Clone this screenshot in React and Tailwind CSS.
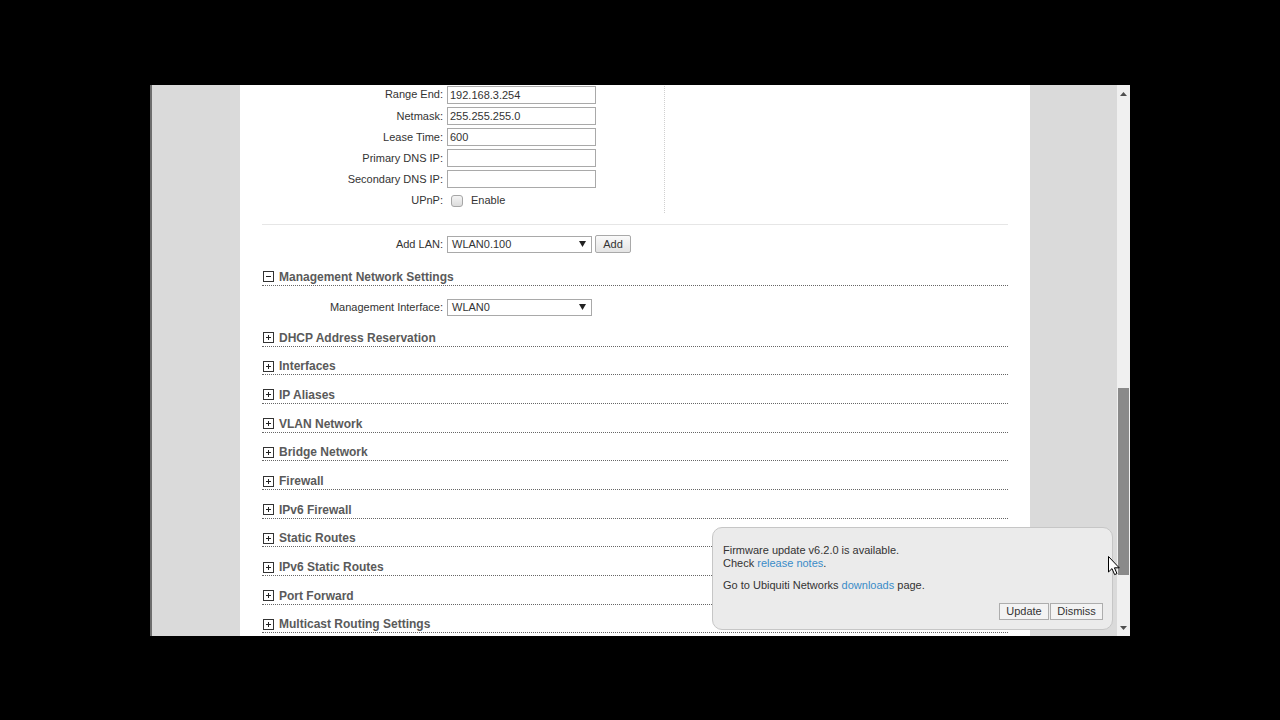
import React from "react";

const font = { fontFamily: '"Liberation Sans", Arial, sans-serif' };

const Field = ({ label, children }) => (
  <div className="flex h-[21.2px] items-center">
    <span className="w-[181px] text-right">{label}</span>
    {children}
  </div>
);

const TextBox = ({ value }) => (
  <div className="ml-[4px] h-[18px] w-[149px] border border-[#a9a9a9] bg-white pl-[2px] leading-[16px]">{value}</div>
);

const SelectBox = ({ value }) => (
  <div className="ml-[4px] flex h-[17px] w-[145px] items-center justify-between border border-[#a9a9a9] bg-white pl-[4px] pr-[5px]">
    <span className="leading-[15px]">{value}</span>
    <svg width="7" height="6" viewBox="0 0 7 6">
      <path d="M0 0 H7 L3.5 6 Z" fill="#222" />
    </svg>
  </div>
);

const ToggleBox = ({ open }) => (
  <svg width="11" height="11" viewBox="0 0 11 11" className="ml-[1px] mr-[5px] shrink-0">
    <rect x="0.5" y="0.5" width="10" height="10" fill="#fff" stroke="#333" />
    <path d="M3 5.5 H8" stroke="#222" strokeWidth="1" />
    {!open && <path d="M5.5 3 V8" stroke="#222" strokeWidth="1" />}
  </svg>
);

const Section = ({ title, open, className }) => (
  <div className={"flex items-end border-b border-dotted border-[#666] " + className}>
    <div className="flex h-[16px] items-center">
      <ToggleBox open={open} />
      <span className="text-[12px] font-bold text-[#5a5a5a]">{title}</span>
    </div>
  </div>
);

const sections = [
  "Interfaces",
  "IP Aliases",
  "VLAN Network",
  "Bridge Network",
  "Firewall",
  "IPv6 Firewall",
  "Static Routes",
  "IPv6 Static Routes",
  "Port Forward",
  "Multicast Routing Settings",
];

export default function App() {
  return (
    <div className="h-[720px] w-[1280px] overflow-hidden bg-black pl-[150px] pt-[85px]" style={font}>
      <div className="relative flex h-[551px] w-[980px] overflow-hidden text-[11px] text-[#333]">
        <div className="w-[90px] border-l-2 border-[#6e6e6e] bg-[#dadada]" />

        <div className="w-[790px] bg-white px-[22px]">
          <div className="-mt-px flex">
            <div className="w-[403px] border-r border-dotted border-[#d0d0d0] pb-[2px]">
              <Field label="Range End:"><TextBox value="192.168.3.254" /></Field>
              <Field label="Netmask:"><TextBox value="255.255.255.0" /></Field>
              <Field label="Lease Time:"><TextBox value="600" /></Field>
              <Field label="Primary DNS IP:"><TextBox value="" /></Field>
              <Field label="Secondary DNS IP:"><TextBox value="" /></Field>
              <Field label="UPnP:">
                <div className="ml-[8px] h-[12px] w-[12px] rounded-[3px] border border-[#a6a6a6] bg-gradient-to-b from-[#f4f4f4] to-[#dcdcdc]" />
                <span className="ml-[8px]">Enable</span>
              </Field>
            </div>
          </div>

          <div className="mt-[11px] border-t border-[#e6e6e6]" />

          <div className="mt-[8.5px] flex h-[21px] items-center">
            <span className="w-[181px] text-right">Add LAN:</span>
            <SelectBox value="WLAN0.100" />
            <button className="ml-[3px] h-[18px] w-[36px] rounded-[2px] border border-[#a9a9a9] bg-gradient-to-b from-[#fafafa] to-[#e4e4e4] leading-[16px] text-[#333]">
              Add
            </button>
          </div>

          <Section title="Management Network Settings" open className="h-[31.3px]" />

          <div className="mt-[11px] flex h-[21px] items-center">
            <span className="w-[181px] text-right">Management Interface:</span>
            <SelectBox value="WLAN0" />
          </div>

          <Section title="DHCP Address Reservation" className="h-[28.7px]" />
          {sections.map((s) => (
            <Section key={s} title={s} className="h-[28.7px]" />
          ))}
        </div>

        <div className="w-[87px] bg-[#dadada]" />

        <div className="flex w-[13px] flex-col bg-[#f0f0f0]">
          <div className="flex h-[17px] items-center justify-center">
            <svg width="7" height="4" viewBox="0 0 7 4">
              <path d="M0 4 L3.5 0 L7 4 Z" fill="#505050" />
            </svg>
          </div>
          <div className="mx-px mt-[286px] h-[187px] bg-[#8a8a8a]" />
          <div className="mt-auto flex h-[17px] items-center justify-center">
            <svg width="7" height="4" viewBox="0 0 7 4">
              <path d="M0 0 L3.5 4 L7 0 Z" fill="#505050" />
            </svg>
          </div>
        </div>

        <div className="absolute left-[562px] top-[442px] h-[103px] w-[401px] rounded-[10px] border border-[#c6c6c6] bg-[#ebebeb] pl-[10px] pt-[16px] leading-[12.5px]">
          <p>Firmware update v6.2.0 is available.</p>
          <p>
            Check <a className="text-[#3a8cc8]">release notes</a>.
          </p>
          <p className="mt-[10px]">
            Go to Ubiquiti Networks <a className="text-[#3a8cc8]">downloads</a> page.
          </p>
          <div className="mt-[11.5px] flex justify-end gap-[1px] pr-[9px]">
            <button className="h-[17px] w-[50px] border border-[#adadad] bg-[#f3f3f3] leading-[15px] text-[#333]">Update</button>
            <button className="h-[17px] w-[53px] border border-[#adadad] bg-[#f3f3f3] leading-[15px] text-[#333]">Dismiss</button>
          </div>
        </div>

        <svg className="absolute left-[958px] top-[471px]" width="13" height="20" viewBox="0 0 13 20">
          <path
            d="M0.5 0.5 L0.5 16 L4 12.6 L6.6 18.6 L9 17.6 L6.4 11.8 L11.2 11.8 Z"
            fill="#fff"
            stroke="#000"
            strokeWidth="1"
            strokeLinejoin="round"
          />
        </svg>
      </div>
    </div>
  );
}
